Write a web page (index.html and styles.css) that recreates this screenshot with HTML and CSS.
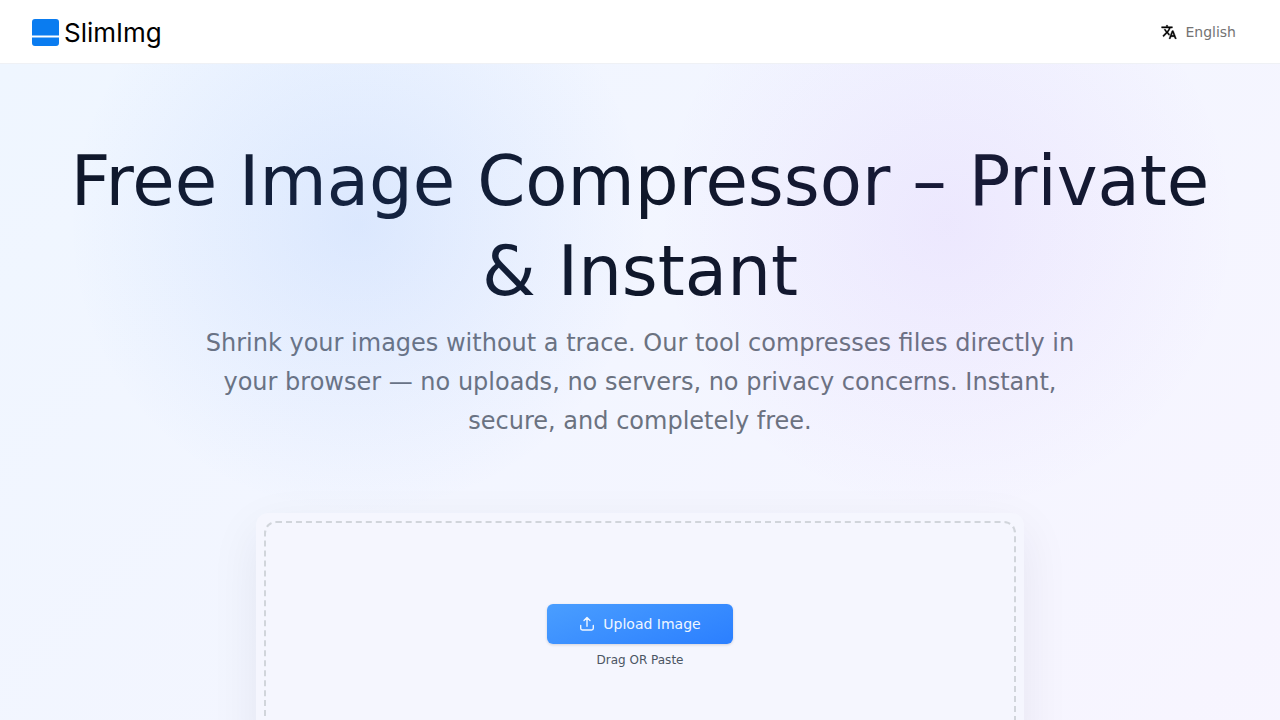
FILE: index.html
```html
<!DOCTYPE html>
<html lang="en">
<head>
<meta charset="utf-8">
<meta name="viewport" content="width=device-width, initial-scale=1">
<title>SlimImg</title>
<link rel="stylesheet" href="styles.css">
</head>
<body>
<header class="site-header">
  <a class="brand" href="#">
    <svg class="brand-mark" viewBox="0 0 27 27" aria-hidden="true">
      <path fill="#0a7cf0" d="M3 0h21a3 3 0 0 1 3 3v13.500H0V3a3 3 0 0 1 3-3zM0 18.500h27V24a3 3 0 0 1-3 3H3a3 3 0 0 1-3-3z"/>
    </svg>
    <span>SlimImg</span>
  </a>
  <button class="language" type="button">
    <svg class="icon" viewBox="0 0 24 24" fill="currentColor" stroke="currentColor" stroke-width="0.700" aria-hidden="true">
      <path d="m12.870 15.070-2.540-2.510.030-.030A17.520 17.520 0 0 0 14.070 6H17V4h-7V2H8v2H1v2h11.170C11.500 7.920 10.440 9.750 9 11.350 8.070 10.320 7.300 9.190 6.690 8h-2c.730 1.630 1.730 3.170 2.980 4.560l-5.090 5.020L4 19l5-5 3.110 3.110.760-2.040zM18.500 10h-2L12 22h2l1.120-3h4.750L21 22h2l-4.500-12zm-2.620 7 1.620-4.330L19.120 17h-3.240z"/>
    </svg>
    <span>English</span>
  </button>
</header>
<main class="hero">
  <section class="intro">
    <h1>Free Image Compressor – Private &amp; Instant</h1>
    <p>Shrink your images without a trace. Our tool compresses files directly in your browser — no uploads, no servers, no privacy concerns. Instant, secure, and completely free.</p>
  </section>
  <section class="card" aria-label="Upload">
    <div class="dropzone">
      <button class="upload" type="button">
        <svg class="icon" viewBox="0 0 16 16" fill="none" stroke="currentColor" stroke-width="1.400" stroke-linecap="round" stroke-linejoin="round" aria-hidden="true">
          <path d="M8 10.300V2M5 4.600l3-3 3 3M1.700 9.500v2.800a1.700 1.700 0 0 0 1.700 1.700h9.200a1.700 1.700 0 0 0 1.700-1.700V9.500"/>
        </svg>
        <span>Upload Image</span>
      </button>
      <p class="hint">Drag OR Paste</p>
    </div>
  </section>
</main>
</body>
</html>
```
FILE: styles.css
```css
* {
  box-sizing: border-box;
}

body {
  margin: 0;
  font-family: "DejaVu Sans", sans-serif;
  background: #fff;
}

h1,
p {
  margin: 0;
}

.site-header {
  display: flex;
  align-items: center;
  justify-content: space-between;
  height: 64px;
  padding: 0 32px;
  border-bottom: 1px solid #eff1f5;
  background: #fff;
}

.brand {
  display: flex;
  align-items: center;
  gap: 5px;
  padding-top: 2px;
  color: #000;
  font-family: Inter, sans-serif;
  font-size: 26px;
  line-height: 32px;
  text-decoration: none;
}

.brand-mark {
  width: 27px;
  height: 27px;
}

.icon {
  width: 16px;
  height: 16px;
  flex: none;
}

.language {
  display: flex;
  align-items: center;
  gap: 8px;
  padding: 8px 12px;
  border: 0;
  background: none;
  color: #000;
  font: inherit;
  font-size: 14px;
  line-height: 20px;
  cursor: pointer;
}

.language span {
  color: #737373;
}

.hero {
  position: relative;
  min-height: calc(100vh - 64px);
  padding: 72px 32px 80px;
  overflow: hidden;
  background: linear-gradient(135deg, #eff6ff, #f8f5ff);
}

/* Soft colour glows laid over the hero content */
.hero::after {
  content: "";
  position: absolute;
  inset: 0;
  background:
    radial-gradient(circle at 28% 160px, rgba(59, 130, 246, 0.12), transparent 290px),
    radial-gradient(circle at 74% 160px, rgba(147, 70, 240, 0.08), transparent 290px);
  pointer-events: none;
}

.intro {
  display: flex;
  flex-direction: column;
  align-items: center;
  gap: 8px;
  text-align: center;
}

h1 {
  max-width: 1200px;
  color: #0f172a;
  font-size: 69px;
  font-weight: 400;
  line-height: 90px;
}

.intro p {
  max-width: 896px;
  color: #6b7280;
  font-size: 24px;
  line-height: 39px;
}

.card {
  max-width: 768px;
  margin: 72px auto 0;
  padding: 8px;
  border-radius: 12px;
  background: #f5f6fe;
  box-shadow: 0 16px 50px rgba(20, 20, 50, 0.07);
}

.dropzone {
  display: flex;
  flex-direction: column;
  align-items: center;
  justify-content: center;
  gap: 8px;
  min-height: 230px;
  padding: 80px 24px;
  border: 2px dashed #d1d5db;
  border-radius: 12px;
}

.upload {
  display: flex;
  align-items: center;
  gap: 8px;
  padding: 10px 32px;
  border: 0;
  border-radius: 6px;
  background: linear-gradient(160deg, #4a9eff, #2b7fff);
  box-shadow: 0 1px 3px rgba(0, 0, 0, 0.15);
  color: #eff6ff;
  font: inherit;
  font-size: 14px;
  line-height: 20px;
  cursor: pointer;
}

.hint {
  color: #4b5563;
  font-size: 12px;
  line-height: 16px;
}
```
